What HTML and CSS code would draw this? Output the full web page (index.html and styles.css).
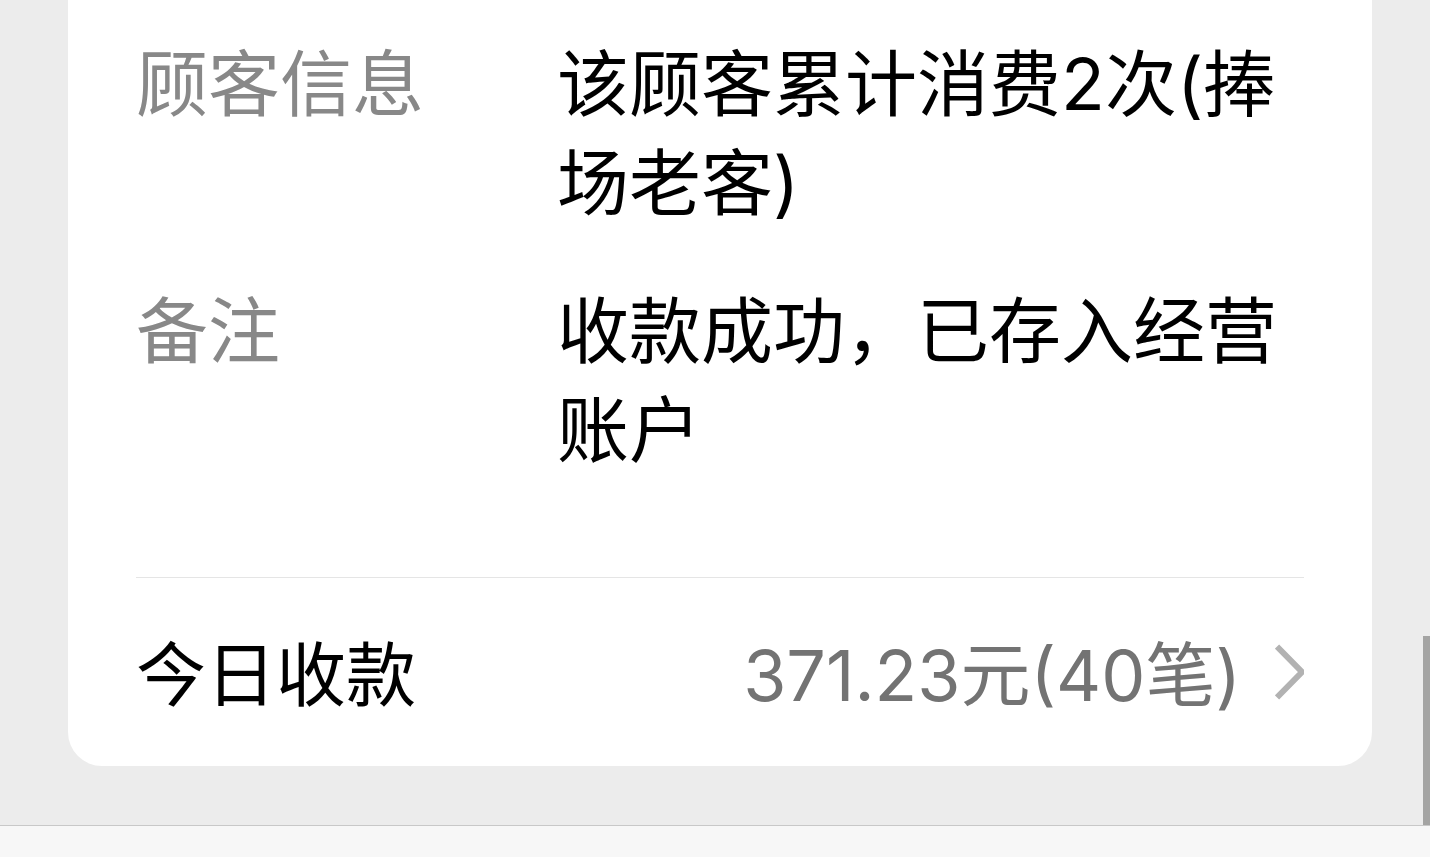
FILE: index.html
```
<!DOCTYPE html>
<html lang="zh-CN">
<head>
    <meta charset="UTF-8">
    <meta name="viewport" content="width=device-width, initial-scale=1">
    <title>收款通知</title>
    <link rel="stylesheet" href="styles.css">
</head>
<body>
    <main class="chat">
        <article class="card">
            <dl class="details">
                <dt>顾客信息</dt>
                <dd>该顾客累计消费2次(捧场老客)</dd>
                <dt>备注</dt>
                <dd>收款成功，已存入经营账户</dd>
            </dl>
            <a class="summary" href="#">
                <span class="summary-label">今日收款</span>
                <span class="summary-value">371.23元(40笔)</span>
                <svg class="arrow" viewBox="0 0 29 56" aria-hidden="true">
                    <path d="M2 2.500L27 28L2 53.500" fill="none" stroke="#b2b2b2" stroke-width="6"/>
                </svg>
            </a>
        </article>
        <div class="scroll-thumb"></div>
    </main>
    <footer class="toolbar"></footer>
</body>
</html>
```

FILE: styles.css
```
* {
    box-sizing: border-box;
}
body {
    margin: 0;
    min-height: 100vh;
    display: flex;
    flex-direction: column;
    background: #ececec;
    color: #000;
    font-family: Inter, "Noto Sans CJK SC", sans-serif;
    font-size: 72px;
    line-height: 99px;
}
.chat {
    position: relative;
    flex: 1;
    padding: 0 58px 59px 68px;
}
.card {
    padding: 34px 68px 0;
    background: #fff;
    border-radius: 0 0 34px 34px;
}
.details {
    display: grid;
    grid-template-columns: 372px 1fr;
    gap: 49px;
    margin: 0;
    padding-bottom: 98px;
}
.details dt {
    color: #888;
}
.details dd {
    margin: 0;
}
.summary {
    display: flex;
    align-items: center;
    padding: 40px 0;
    border-top: 1px solid #e5e5e5;
    color: inherit;
    font-size: 70px;
    line-height: 108px;
    text-decoration: none;
}
.summary-label,
.summary-value {
    padding-top: 8px;
    line-height: 100px;
}
.summary-value {
    margin-left: auto;
    color: #737373;
}
.arrow {
    width: 29px;
    height: 56px;
    margin-left: 34px;
}
.scroll-thumb {
    position: absolute;
    right: 0;
    bottom: 0;
    width: 7px;
    height: 189px;
    background: #a4a4a3;
}
.toolbar {
    height: 32px;
    background: #f7f7f7;
    border-top: 1px solid #c8c8c8;
}
```
